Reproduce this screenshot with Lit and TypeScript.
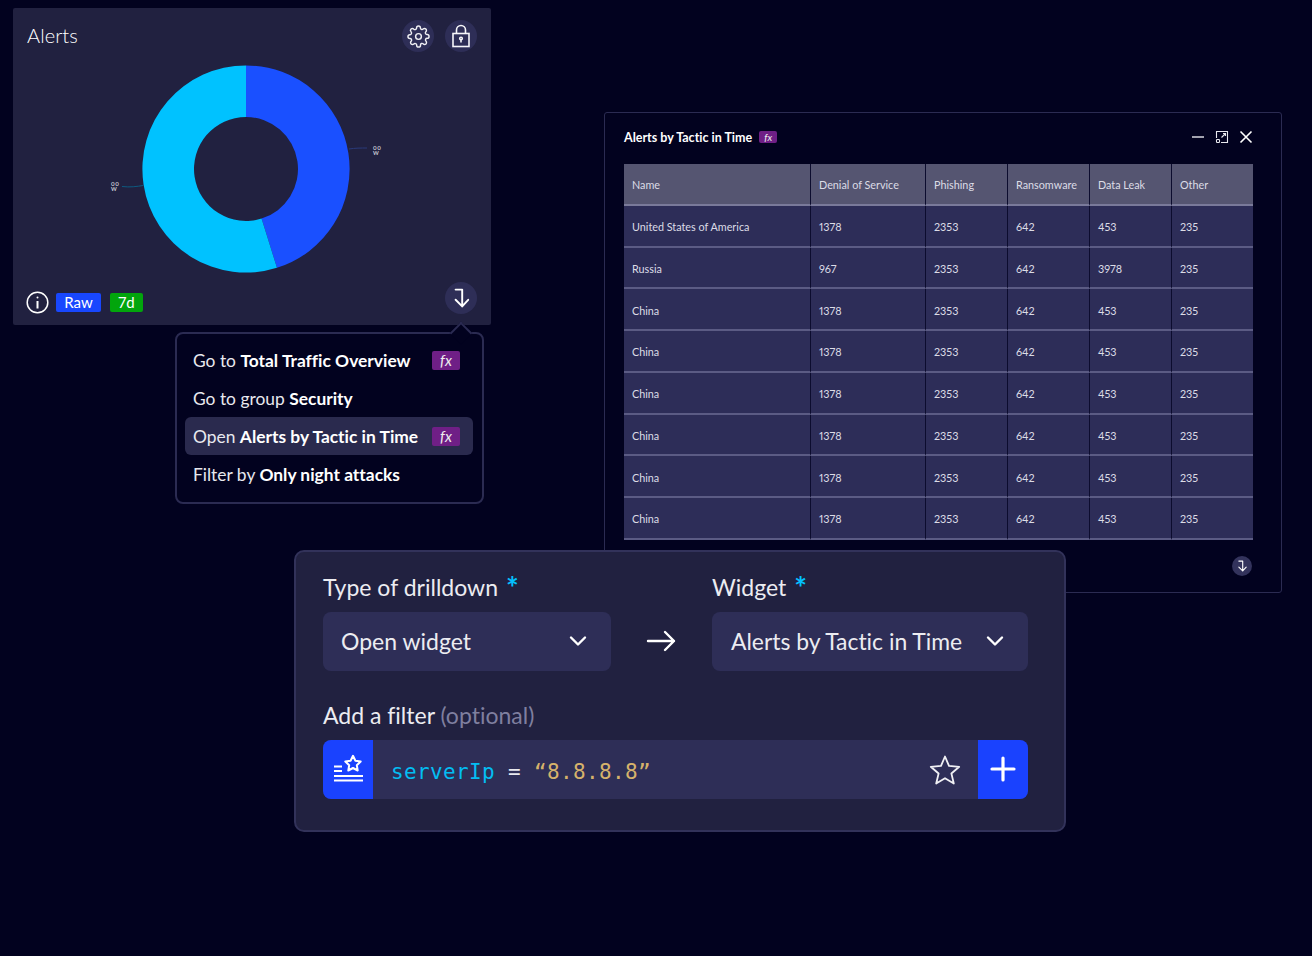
import { LitElement, html, css, svg } from "lit";
import { customElement } from "lit/decorators.js";

const rows = [
  ["United States of America", "1378", "2353", "642", "453", "235"],
  ["Russia", "967", "2353", "642", "3978", "235"],
  ...Array(6).fill(["China", "1378", "2353", "642", "453", "235"]),
];
const heads = ["Name", "Denial of Service", "Phishing", "Ransomware", "Data Leak", "Other"];

const drill = (size: number) => html`<svg width=${size} height=${size} viewBox="0 0 20 20" fill="none" stroke="#fff" stroke-width="1.6" stroke-linecap="round" stroke-linejoin="round"><path d="M5.5 3H11v14M5.5 11.5 11 17l5-5.500"/></svg>`;
const chevron = html`<svg width="18" height="12" viewBox="0 0 18 12" fill="none" stroke="#fff" stroke-width="2.400" stroke-linecap="round" stroke-linejoin="round"><path d="M2 2.500 9 9.500l7-7"/></svg>`;

function arc(a0: number, a1: number, R: number, r: number) {
  const p = (a: number, q: number) => {
    const t = ((a - 90) * Math.PI) / 180;
    return `${(110 + q * Math.cos(t)).toFixed(2)} ${(110 + q * Math.sin(t)).toFixed(2)}`;
  };
  const l = a1 - a0 > 180 ? 1 : 0;
  return `M${p(a0, R)}A${R} ${R} 0 ${l} 1 ${p(a1, R)}L${p(a1, r)}A${r} ${r} 0 ${l} 0 ${p(a0, r)}Z`;
}

@customElement("app-root")
export class AppRoot extends LitElement {
  static styles = css`
    :host { display: block; }
    * { box-sizing: border-box; }
    .canvas {
      position: relative; width: 1312px; height: 956px; overflow: hidden;
      background: #02021f; color: #fff;
      font-family: Lato, "Open Sans", sans-serif; font-variant-ligatures: none;
      font-variant-numeric: proportional-nums;
    }
    /* Alerts widget */
    .alerts {
      position: absolute; left: 13px; top: 8px; width: 478px; height: 317px;
      background: #212140; border-radius: 2px;
      display: flex; flex-direction: column; padding: 0 14px 0 13px;
    }
    .alerts-top { display: flex; align-items: center; height: 56px; }
    .alerts-title { font-size: 20px; font-weight: 300; color: #fff; flex: 1; padding-left: 1px; letter-spacing: .1px; margin-bottom: 2px; }
    .round {
      width: 32px; height: 32px; border-radius: 50%; background: #2e2e57;
      display: flex; align-items: center; justify-content: center;
    }
    .icons { display: flex; gap: 11px; }
    .chart { position: absolute; left: 123px; top: 51.300px; }
    .labels { position: absolute; left: 85px; top: 125px; }
    .labels text { font-family: Lato, sans-serif; font-size: 5.500px; font-weight: 700; fill: #c8c8d4; letter-spacing: .6px; }
    .alerts-bottom {
      margin-top: auto; display: flex; align-items: center; height: 46px;
    }
    .info { margin-right: 7px; display: block; }
    .tag { height: 19px; border-radius: 2px; font-size: 15px; line-height: 19px; text-align: center; color: #fff; }
    .tag.raw { width: 45px; background: #1847fe; margin-right: 9px; }
    .tag.d7 { width: 33px; background: #02a50c; }
    .spacer { flex: 1; }
    .alerts-bottom .round { margin-top: -8px; }
    /* menu */
    .menu {
      position: absolute; left: 175px; top: 332px; width: 309px; height: 172px;
      background: #02021f; border: 2px solid #2b2b52; border-radius: 8px;
      padding: 7px 9px 0 8px; display: flex; flex-direction: column;
    }
    .caret {
      position: absolute; right: 13px; top: -9px; width: 16px; height: 16px;
      background: #02021f; border-left: 2px solid #2b2b52; border-top: 2px solid #2b2b52;
      transform: rotate(45deg);
    }
    .item {
      position: relative; height: 38px; display: flex; align-items: center; justify-content: space-between;
      padding: 0 13px 0 8px; font-size: 17.400px; color: #e8e8ee; border-radius: 6px; white-space: pre;
    }
    .item b { font-weight: 700; color: #fff; }
    .item.on { background: #2a2a4e; }
    .fx {
      display: inline-flex; align-items: center; justify-content: center;
      background: #6f1f86; color: #eee; border-radius: 2px; font-style: italic;
    }
    .item .fx { width: 28px; height: 19px; font-size: 15px; }
    /* table window */
    .table-win {
      position: absolute; left: 604px; top: 112px; width: 678px; height: 481px;
      background: #02021f; border: 1px solid #2b2b52; border-radius: 3px;
      padding: 0 27px 0 19px; display: flex; flex-direction: column;
    }
    .win-top { height: 51px; display: flex; align-items: center; padding-bottom: 3px; }
    .win-title { font-size: 12.500px; font-weight: 700; color: #fff; margin-right: 7px; }
    .win-top .fx { width: 18px; height: 12px; font-size: 10px; }
    .win-btns { margin-left: auto; display: flex; align-items: center; gap: 10px; margin-right: 1px; }
    .grid { display: grid; grid-template-columns: 186px 115px 82px 82px 82px 82px; font-size: 10.800px; color: #dcdce6; }
    .cell {
      height: 41.780px; display: flex; align-items: center; padding-left: 8px;
      background: #2d2d58; border-bottom: 2px solid #5b5b84; border-left: 1px solid #0c0c2e;
      padding-top: 1.800px;
    }
    .cell.first { border-left: 0; }
    .cell.head { background: #555571; border-bottom-color: #7a7a9a; padding-top: 1px; }
    .win-foot { display: flex; justify-content: flex-end; padding-top: 16px; padding-right: 2px; }
    .win-foot .round { width: 20px; height: 20px; background: #33335c; }
    /* form */
    .form {
      position: absolute; left: 294px; top: 550px; width: 772px; height: 282px;
      background: #212140; border: 2px solid #32325a; border-radius: 10px;
      padding: 20px 36px 0 27px;
    }
    .selects { display: grid; grid-template-columns: 288px 101px 316px; }
    .field-label { font-size: 23px; height: 40px; line-height: 30px; color: #ececf1; white-space: pre; display: flex; }
    .star { color: #03c0ff; font-size: 30px; line-height: 30px; margin-left: 8px; font-weight: 700; }
    .select {
      height: 59px; background: #2e2e57; border-radius: 8px; display: flex; align-items: center;
      justify-content: space-between; font-size: 23px; color: #ececf1; padding: 0 24px 2px 18px;
    }
    .select.w { padding-left: 19px; font-size: 22.900px; }
    .arrow { display: flex; align-items: flex-end; justify-content: center; padding-bottom: 18px; padding-right: 2px; }
    .filter-label { margin-top: 29px; height: 40px; font-size: 23px; line-height: 30px; color: #ececf1; white-space: pre; }
    .filter-label span { color: #7f7f9f; }
    .filter {
      height: 59px; background: #2e2e57; border-radius: 8px; display: flex; align-items: center; overflow: hidden;
    }
    .fbtn { width: 50px; height: 59px; background: #1a42fe; display: flex; align-items: center; justify-content: center; flex: none; }
    .code {
      flex: 1; padding-left: 18px; font-family: "DejaVu Sans Mono", "Liberation Mono", monospace; font-size: 21px;
      white-space: pre; letter-spacing: .35px; padding-top: 4px;
    }
    .code .k { color: #03bdf2; }
    .code .o { color: #e8e8ee; }
    .code .v { color: #d6b26b; }
    .fav { margin: 0 17px 0 0; display: block; }
    .plus { display: block; margin-bottom: 2px; }
    .flt { display: block; margin-bottom: 1px; }
  `;

  render() {
    return html`<div class="canvas">
      <section class="table-win">
        <div class="win-top">
          <span class="win-title">Alerts by Tactic in Time</span><span class="fx">fx</span>
          <div class="win-btns">
            <svg width="14" height="14" viewBox="0 0 14 14" fill="none" stroke="#e8e8ee" stroke-width="1.400"><path d="M1 7h12"/></svg>
            <svg width="14" height="14" viewBox="0 0 14 14" fill="none" stroke="#e8e8ee" stroke-width="1.100"><path d="M1.500 8V1.500h11v11H6M8 3.500h2.500V6M10.500 3.500 6.500 7.500"/><rect x="1.500" y="9.500" width="3" height="3" rx=".7"/></svg>
            <svg width="14" height="14" viewBox="0 0 14 14" fill="none" stroke="#fff" stroke-width="1.600"><path d="M1.500 1.500l11 11M12.500 1.500l-11 11"/></svg>
          </div>
        </div>
        <div class="grid">
          ${heads.map((h, i) => html`<div class="cell head ${i === 0 ? "first" : ""}">${h}</div>`)}
          ${rows.map((r) => r.map((c, i) => html`<div class="cell ${i === 0 ? "first" : ""}">${c}</div>`))}
        </div>
        <div class="win-foot"><div class="round">${drill(14)}</div></div>
      </section>

      <section class="alerts">
        <div class="alerts-top">
          <div class="alerts-title">Alerts</div>
          <div class="icons">
            <div class="round">
              <svg width="23" height="23" viewBox="0 0 24 24" fill="none" stroke="#f0f0f4" stroke-width="1.500" stroke-linejoin="round"><circle cx="12" cy="12" r="3"/><path d="M19.400 15a1.650 1.650 0 0 0 .33 1.820l.06.06a2 2 0 1 1-2.830 2.830l-.06-.06a1.650 1.650 0 0 0-2.800 1.170V21a2 2 0 0 1-4 0v-.09A1.650 1.650 0 0 0 9 19.400a1.650 1.650 0 0 0-1.820.33l-.06.06a2 2 0 1 1-2.830-2.830l.06-.06a1.650 1.650 0 0 0-1.170-2.800H3a2 2 0 0 1 0-4h.09A1.650 1.650 0 0 0 4.600 9a1.650 1.650 0 0 0-.33-1.820l-.06-.06a2 2 0 1 1 2.830-2.830l.06.06A1.650 1.650 0 0 0 9 4.600h.09A1.650 1.650 0 0 0 10 3.090V3a2 2 0 0 1 4 0v.09a1.650 1.650 0 0 0 2.800 1.170l.06-.06a2 2 0 1 1 2.830 2.830l-.06.06a1.650 1.650 0 0 0 1.170 2.800H21a2 2 0 0 1 0 4h-.09a1.650 1.650 0 0 0-1.510 1z"/></svg>
            </div>
            <div class="round">
              <svg width="22" height="26" viewBox="0 0 22 26" fill="none" stroke="#f6f6fa" stroke-width="1.600"><rect x="3" y="10.500" width="16" height="13"/><path d="M6.500 10.500V7a4.500 4.500 0 0 1 9 0v3.500"/><circle cx="11" cy="15.500" r="1.300"/><path d="M11 16.500v3"/></svg>
            </div>
          </div>
        </div>
        <svg class="chart" width="220" height="220" viewBox="0 0 220 220">
          ${svg`<path d=${arc(0, 162.6, 103.6, 52)} fill="#1a50ff"/><path d=${arc(162.6, 360, 103.6, 52)} fill="#00c2ff"/>`}
        </svg>
        <svg class="labels" width="290" height="70" viewBox="0 0 290 70" fill="none">
          <path d="M24 53.500c8 1 15 0 21-1" stroke="#0d5a80"/>
          <path d="M251 16c6-1 12-1 18-1" stroke="#2a3a7a"/>
          <text x="13" y="52.500">00</text><text x="13" y="57.500">W</text>
          <text x="275" y="16.500">00</text><text x="275" y="21.500">W</text>
        </svg>
        <div class="alerts-bottom">
          <svg class="info" width="23" height="23" viewBox="0 0 23 23" fill="none" stroke="#fff"><circle cx="11.500" cy="11.500" r="10.300" stroke-width="1.500"/><path d="M11.500 10v7.500" stroke-width="2"/><circle cx="11.500" cy="6.500" r="1" fill="#fff" stroke="none"/></svg>
          <div class="tag raw">Raw</div><div class="tag d7">7d</div>
          <div class="spacer"></div>
          <div class="round">${drill(24)}</div>
        </div>
      </section>

      <nav class="menu">
        <div class="caret"></div>
        <div class="item"><span>Go to <b>Total Traffic Overview</b></span><span class="fx">fx</span></div>
        <div class="item"><span>Go to group <b>Security</b></span></div>
        <div class="item on"><span>Open <b>Alerts by Tactic in Time</b></span><span class="fx">fx</span></div>
        <div class="item"><span>Filter by <b>Only night attacks</b></span></div>
      </nav>

      <section class="form">
        <div class="selects">
          <div>
            <div class="field-label">Type of drilldown<span class="star">*</span></div>
            <div class="select"><span>Open widget</span>${chevron}</div>
          </div>
          <div class="arrow">
            <svg width="30" height="24" viewBox="0 0 30 24" fill="none" stroke="#fff" stroke-width="2.400" stroke-linecap="round" stroke-linejoin="round"><path d="M2 12h26M19 3l9 9-9 9"/></svg>
          </div>
          <div>
            <div class="field-label">Widget<span class="star">*</span></div>
            <div class="select w"><span>Alerts by Tactic in Time</span>${chevron}</div>
          </div>
        </div>
        <div class="filter-label">Add a filter <span>(optional)</span></div>
        <div class="filter">
          <div class="fbtn">
            <svg class="flt" width="30" height="30" viewBox="0 0 30 30" fill="none" stroke="#fff" stroke-linejoin="round"><path d="M20 1.800l2.400 4.900 5.300.8-3.900 3.700.9 5.300-4.700-2.500-4.700 2.500.9-5.300-3.900-3.700 5.300-.8z" stroke-width="2"/><path d="M1 12.500h8M1 17h8M1 22h29M1 26.500h29" stroke-width="2"/></svg>
          </div>
          <div class="code"><span class="k">serverIp</span> <span class="o">=</span> <span class="v">“8.8.8.8”</span></div>
          <svg class="fav" width="32" height="32" viewBox="0 0 32 32" fill="none" stroke="#f0f0f4" stroke-width="1.800" stroke-linejoin="round"><path d="M16 2.500l4 9.400 10.200.9-7.800 6.700 2.400 10-8.800-5.300-8.800 5.300 2.400-10-7.800-6.700 10.200-.9z"/></svg>
          <div class="fbtn">
            <svg class="plus" width="28" height="28" viewBox="0 0 28 28" fill="none" stroke="#fff" stroke-width="3.200" stroke-linecap="round"><path d="M14 3v22M3 14h22"/></svg>
          </div>
        </div>
      </section>
    </div>`;
  }
}
